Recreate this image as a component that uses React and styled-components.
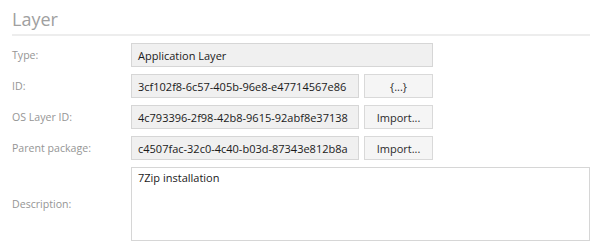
import { Fragment } from "react";
import styled, { createGlobalStyle } from "styled-components";

const GlobalStyle = createGlobalStyle`
  body {
    margin: 0;
    background: #ffffff;
    font-family: "Open Sans", "Noto Sans", sans-serif;
  }
`;

const Panel = styled.div`
  width: 602px;
  height: 250px;
  box-sizing: border-box;
  padding: 7px 12px 0 12px;
`;

const Title = styled.div`
  font-size: 18px;
  font-weight: 400;
  color: #a0a0a0;
  line-height: 24px;
  padding-bottom: 3px;
  border-bottom: 2px solid #ededed;
`;

const Form = styled.div`
  display: grid;
  grid-template-columns: 119px 1fr;
  row-gap: 7px;
  margin-top: 7px;
  align-items: center;
`;

const Label = styled.div`
  font-size: 10.6px;
  color: #959595;
`;

const Row = styled.div`
  display: flex;
  gap: 5px;
`;

const Field = styled.div`
  box-sizing: border-box;
  width: ${(p) => p.$width}px;
  height: ${(p) => p.$height || 24}px;
  padding: ${(p) => (p.$multi ? "2px 6px" : "0 6px")};
  display: flex;
  align-items: ${(p) => (p.$multi ? "flex-start" : "center")};
  background: ${(p) => (p.$multi ? "#ffffff" : "#f0f0f0")};
  border: 1px solid #d6d6d6;
  font-size: 11px;
  color: #1a1a1a;
  white-space: nowrap;
  overflow: hidden;
`;

const Button = styled.div`
  box-sizing: border-box;
  width: 69px;
  height: 24px;
  display: flex;
  align-items: center;
  justify-content: center;
  background: #f5f5f5;
  border: 1px solid #d9d9d9;
  font-size: 11px;
  color: #2a2a2a;
`;

const rows = [
  { label: "ID:", value: "3cf102f8-6c57-405b-96e8-e47714567e86", button: "{...}" },
  { label: "OS Layer ID:", value: "4c793396-2f98-42b8-9615-92abf8e37138", button: "Import..." },
  { label: "Parent package:", value: "c4507fac-32c0-4c40-b03d-87343e812b8a", button: "Import..." },
];

export default function App() {
  return (
    <>
      <GlobalStyle />
      <Panel>
        <Title>Layer</Title>
        <Form>
          <Label>Type:</Label>
          <Field $width={302}>Application Layer</Field>
          {rows.map((r) => (
            <Fragment key={r.label}>
              <Label>{r.label}</Label>
              <Row>
                <Field $width={228}>{r.value}</Field>
                <Button>{r.button}</Button>
              </Row>
            </Fragment>
          ))}
          <Label>Description:</Label>
          <Field $width={459} $height={74} $multi>
            7Zip installation
          </Field>
        </Form>
      </Panel>
    </>
  );
}
